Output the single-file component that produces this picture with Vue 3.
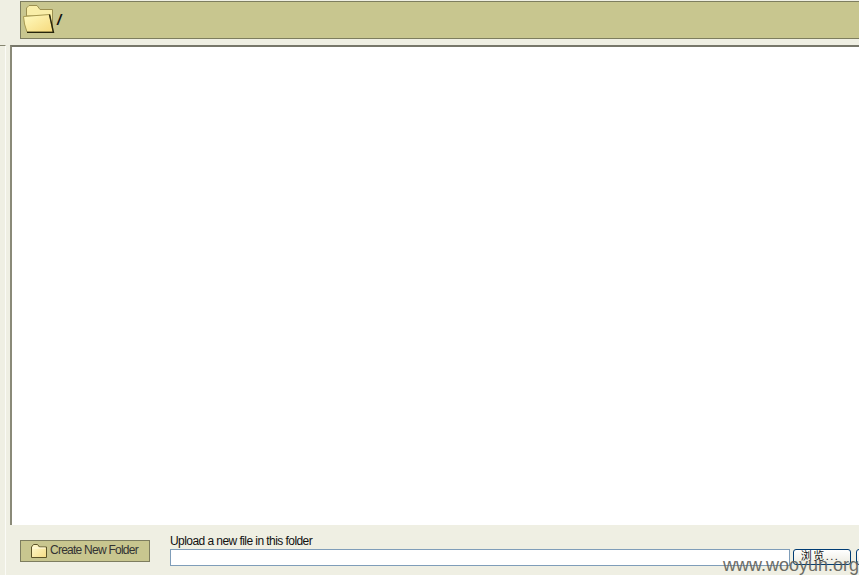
<template>
  <div class="manager">
    <div class="path-row">
      <div class="path-bar">
        <svg class="folder-big" viewBox="0 0 32 28" width="32" height="28">
          <defs>
            <linearGradient id="bigFront" x1="0" y1="0" x2="1" y2="1">
              <stop offset="0" stop-color="#fffbc0" />
              <stop offset="1" stop-color="#f6d97c" />
            </linearGradient>
            <linearGradient id="smallFill" x1="0" y1="0" x2="1" y2="1">
              <stop offset="0" stop-color="#fffbd0" />
              <stop offset="1" stop-color="#f5dc84" />
            </linearGradient>
          </defs>
          <path d="M3.5 11V3L6 0.5H14L17 4.5H29.5V27H27V11Z" fill="#f9eea8" stroke="#9c9050" stroke-width="1" />
          <path d="M0.5 11.5L26.5 9.5L30 27H4L1.5 19Z" fill="url(#bigFront)" stroke="#a89a50" stroke-width="1" />
          <path d="M26.5 9.5L30.5 27.5H4" fill="none" stroke="#26240c" stroke-width="1.4" />
        </svg>
        <span class="path-text">/</span>
      </div>
    </div>

    <div class="middle">
      <div class="left-stub"></div>
      <div class="listing"></div>
    </div>

    <div class="footer">
      <button class="new-folder" type="button">
        <svg class="folder-small" viewBox="0 0 16 14" width="16" height="14">
          <path d="M0.5 3L2.5 0.5H6.5L8.5 3H15.5V13.5H0.5Z" fill="url(#smallFill)" stroke="#5c5428" stroke-width="1" />
          <path d="M1.5 4H14.5" stroke="#fffbe0" stroke-width="1" />
        </svg>
        <span>Create New Folder</span>
      </button>
      <div class="upload">
        <label class="upload-label">Upload a new file in this folder</label>
        <div class="upload-row">
          <div class="file-input"></div>
          <button class="browse" type="button">浏览...</button>
          <button class="submit" type="button"></button>
        </div>
      </div>
    </div>

    <div class="watermark">www.wooyun.org</div>
  </div>
</template>

<script setup>
</script>

<style>
html, body {
  margin: 0;
  background: #efefe3;
  overflow: hidden;
}
</style>

<style scoped>
.manager {
  position: relative;
  width: 859px;
  height: 575px;
  overflow: hidden;
  background: #efefe3;
  font-family: "Liberation Sans", "Noto Sans CJK SC", sans-serif;
  color: #111;
}
.path-row {
  height: 45px;
  padding: 1px 0 0 20px;
  box-sizing: border-box;
}
.path-bar {
  display: flex;
  align-items: center;
  height: 38px;
  box-sizing: border-box;
  padding-left: 2px;
  background: #c8c68f;
  border: 1px solid #7d7d5f;
  border-right: 0;
}
.folder-big {
  flex: none;
  margin-top: -3px;
}
.path-text {
  margin: -2px 0 0 2px;
  font-size: 15px;
  font-weight: bold;
  font-style: italic;
}
.middle {
  display: flex;
  height: 480px;
}
.left-stub {
  width: 6px;
  height: 480px;
  margin-right: 4px;
  border-top: 1px solid #85856f;
  border-right: 1px solid #fbfbf6;
  box-sizing: border-box;
}
.listing {
  flex: 1;
  background: #fff;
  border-top: 2px solid #77776a;
  border-left: 2px solid #8a8a78;
  box-sizing: border-box;
}
.footer {
  display: flex;
  align-items: flex-start;
  height: 50px;
  margin-left: 5px;
  padding: 15px 0 0 14px;
  box-sizing: border-box;
  border-left: 1px solid #fbfbf6;
}
.new-folder {
  display: flex;
  align-items: center;
  gap: 3px;
  width: 130px;
  height: 22px;
  padding: 0 0 2px 10px;
  flex: none;
  box-sizing: border-box;
  background: #c8c68f;
  border: 1px solid #7d7d5f;
  font-family: inherit;
  font-size: 12px;
  color: #333;
  letter-spacing: -0.75px;
  white-space: nowrap;
}
.folder-small {
  flex: none;
  margin-top: 2px;
}
.upload {
  margin: -6px 0 0 20px;
  flex: none;
  width: 700px;
}
.upload-label {
  display: block;
  height: 15px;
  font-size: 12px;
  line-height: 15px;
  letter-spacing: -0.56px;
  color: #111;
}
.upload-row {
  display: flex;
  align-items: flex-start;
}
.file-input {
  width: 620px;
  height: 17px;
  flex: none;
  box-sizing: border-box;
  background: #fff;
  border: 1px solid #7f9db9;
}
.browse {
  width: 58px;
  height: 16px;
  flex: none;
  margin-left: 3px;
  padding: 0 4px 2px 0;
  box-sizing: border-box;
  background: linear-gradient(#ffffff, #ecebe0);
  border: 1px solid #003c74;
  border-radius: 3px;
  font-family: inherit;
  font-size: 11px;
  line-height: 12px;
  letter-spacing: 1.5px;
  white-space: nowrap;
  color: #111;
}
.submit {
  width: 20px;
  height: 16px;
  flex: none;
  margin-left: 5px;
  padding: 0;
  box-sizing: border-box;
  background: linear-gradient(#ffffff, #ecebe0);
  border: 1px solid #003c74;
  border-radius: 3px;
}
.watermark {
  position: absolute;
  left: 723px;
  top: 555px;
  font-size: 18px;
  line-height: 20px;
  white-space: nowrap;
  color: #5e5e58;
  opacity: 0.9;
}
</style>
